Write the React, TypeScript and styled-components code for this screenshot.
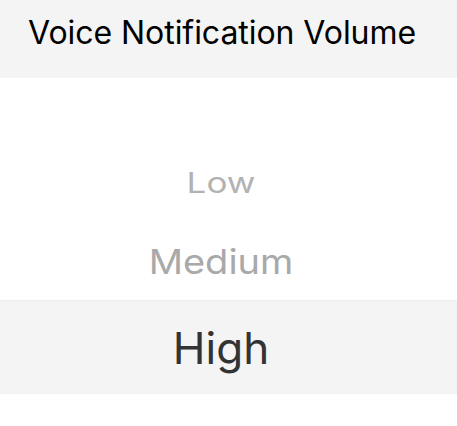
import { createGlobalStyle, styled } from 'styled-components'

const GlobalStyle = createGlobalStyle`
  html, body {
    margin: 0;
    padding: 0;
    background: #ffffff;
    font-family: Inter, 'Noto Sans', sans-serif;
  }
`

const options = [
  { label: 'Low', tier: 'far' },
  { label: 'Medium', tier: 'near' },
  { label: 'High', tier: 'selected' },
] as const

type Tier = (typeof options)[number]['tier']

export default function App() {
  return (
    <>
      <GlobalStyle />
      <Screen>
        <Header>Voice Notification Volume</Header>
        <Picker>
          {options.map((option) => (
            <PickerRow key={option.label} $tier={option.tier}>
              <PickerLabel $tier={option.tier}>{option.label}</PickerLabel>
            </PickerRow>
          ))}
        </Picker>
      </Screen>
    </>
  )
}

const Screen = styled.div`
  width: 457px;
  height: 426px;
  overflow: hidden;
  background: #ffffff;
`

const Header = styled.div`
  height: 78px;
  box-sizing: border-box;
  padding: 14px 0 0 28px;
  background: #f4f4f4;
  color: #000000;
  font-size: 32px;
  line-height: 38px;
  letter-spacing: -0.05px;
`

const Picker = styled.div`
  display: flex;
  flex-direction: column;
  padding-top: 65px;
`

const rowHeight: Record<Tier, string> = {
  far: '78px',
  near: '79px',
  selected: '94px',
}

const labelSize: Record<Tier, string> = {
  far: '35px',
  near: '38px',
  selected: '44px',
}

const labelSquash: Record<Tier, string> = {
  far: 'scaleY(0.8)',
  near: 'scaleY(0.9)',
  selected: 'none',
}

const PickerRow = styled.div<{ $tier: Tier }>`
  height: ${({ $tier }) => rowHeight[$tier]};
  display: flex;
  align-items: center;
  justify-content: center;
  box-sizing: border-box;
  padding-right: 15px;
  background: ${({ $tier }) => ($tier === 'selected' ? '#f4f4f4' : 'transparent')};
  border-top: ${({ $tier }) => ($tier === 'selected' ? '1px solid #ececec' : 'none')};
`

const PickerLabel = styled.span<{ $tier: Tier }>`
  color: ${({ $tier }) =>
    $tier === 'selected' ? '#333333' : $tier === 'near' ? '#a9a9a9' : '#b2b2b2'};
  font-size: ${({ $tier }) => labelSize[$tier]};
  line-height: 1;
  transform: ${({ $tier }) => labelSquash[$tier]};
`
